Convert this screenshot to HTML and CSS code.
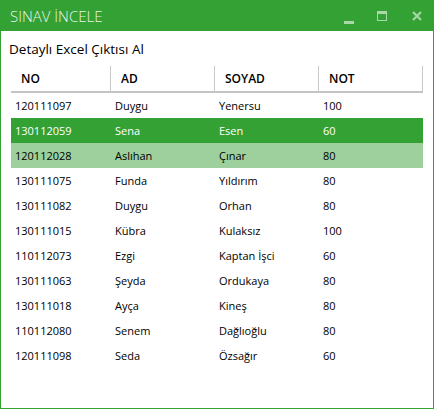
FILE: index.html
```html
<!DOCTYPE html>
<html lang="tr">
<head>
<meta charset="utf-8">
<link rel="stylesheet" href="styles.css">
</head>
<body>
<div class="window">
  <div class="titlebar">
    <span class="title">SINAV İNCELE</span>
    <div class="controls">
      <svg class="ctl" width="10" height="10" viewBox="0 0 10 10"><rect x="0" y="7" width="10" height="3" fill="currentColor"/></svg>
      <svg class="ctl" width="10" height="10" viewBox="0 0 10 10"><rect x="0.5" y="0.5" width="9" height="9" fill="none" stroke="currentColor" stroke-width="1"/><rect x="0" y="0" width="10" height="3" fill="currentColor"/></svg>
      <svg class="ctl" width="10" height="10" viewBox="0 0 10 10"><path d="M1 1 L9 9 M9 1 L1 9" stroke="currentColor" stroke-width="2"/></svg>
    </div>
  </div>
  <div class="content">
    <div class="subtitle">Detaylı Excel Çıktısı Al</div>
    <div class="grid">
      <div class="hcell">NO</div><div class="hcell">AD</div><div class="hcell">SOYAD</div><div class="hcell">NOT</div>
      <div class="row"><div class="cell">120111097</div><div class="cell">Duygu</div><div class="cell">Yenersu</div><div class="cell">100</div></div>
      <div class="row sel"><div class="cell">130112059</div><div class="cell">Sena</div><div class="cell">Esen</div><div class="cell">60</div></div>
      <div class="row hov"><div class="cell">120112028</div><div class="cell">Aslıhan</div><div class="cell">Çınar</div><div class="cell">80</div></div>
      <div class="row"><div class="cell">130111075</div><div class="cell">Funda</div><div class="cell">Yıldırım</div><div class="cell">80</div></div>
      <div class="row"><div class="cell">130111082</div><div class="cell">Duygu</div><div class="cell">Orhan</div><div class="cell">80</div></div>
      <div class="row"><div class="cell">130111015</div><div class="cell">Kübra</div><div class="cell">Kulaksız</div><div class="cell">100</div></div>
      <div class="row"><div class="cell">110112073</div><div class="cell">Ezgi</div><div class="cell">Kaptan İşci</div><div class="cell">60</div></div>
      <div class="row"><div class="cell">130111063</div><div class="cell">Şeyda</div><div class="cell">Ordukaya</div><div class="cell">80</div></div>
      <div class="row"><div class="cell">130111018</div><div class="cell">Ayça</div><div class="cell">Kineş</div><div class="cell">80</div></div>
      <div class="row"><div class="cell">110112080</div><div class="cell">Senem</div><div class="cell">Dağlıoğlu</div><div class="cell">80</div></div>
      <div class="row"><div class="cell">120111098</div><div class="cell">Seda</div><div class="cell">Özsağır</div><div class="cell">60</div></div>
    </div>
  </div>
</div>
</body>
</html>
```

FILE: styles.css
```css
html, body {
  margin: 0;
  padding: 0;
  background: #ffffff;
}
.window {
  width: 434px;
  height: 409px;
  box-sizing: border-box;
  border: 1px solid #34a135;
  background: #ffffff;
  font-family: "Open Sans", "Noto Sans", sans-serif;
  color: #000;
  display: flex;
  flex-direction: column;
}
.titlebar {
  height: 30px;
  background: #34a135;
  display: flex;
  align-items: center;
  justify-content: space-between;
  padding-left: 9px;
}
.title {
  color: #e8f6e8;
  font-size: 15px;
  font-weight: 300;
}
.controls {
  display: flex;
  align-items: center;
  height: 100%;
}
.ctl {
  color: #a9d8a9;
  display: block;
}
.controls .ctl:nth-child(1) { margin-right: 23px; margin-top: 5px; }
.controls .ctl:nth-child(2) { margin-right: 25px; }
.controls .ctl:nth-child(3) { margin-right: 11px; }
.content {
  padding: 0 0 0 10px;
}
.subtitle {
  font-size: 13.5px;
  line-height: 20px;
  padding-top: 8px;
  margin-left: -2px;
  height: 27px;
}
.grid {
  display: grid;
  grid-template-columns: 100px 104px 104px 104px;
  width: 412px;
}
.hcell {
  height: 25px;
  line-height: 25px;
  border-right: 1px solid #c8c8c8;
  border-bottom: 2px solid #c4c4c4;
  padding-left: 10px;
  font-size: 12px;
  font-weight: 600;
}
.row {
  display: contents;
}
.cell {
  height: 25px;
  line-height: 25px;
  padding-left: 4px;
  font-size: 11px;
}
.sel .cell {
  background: #34a135;
  color: #ffffff;
}
.hov .cell {
  background: #9dd09c;
}
```
